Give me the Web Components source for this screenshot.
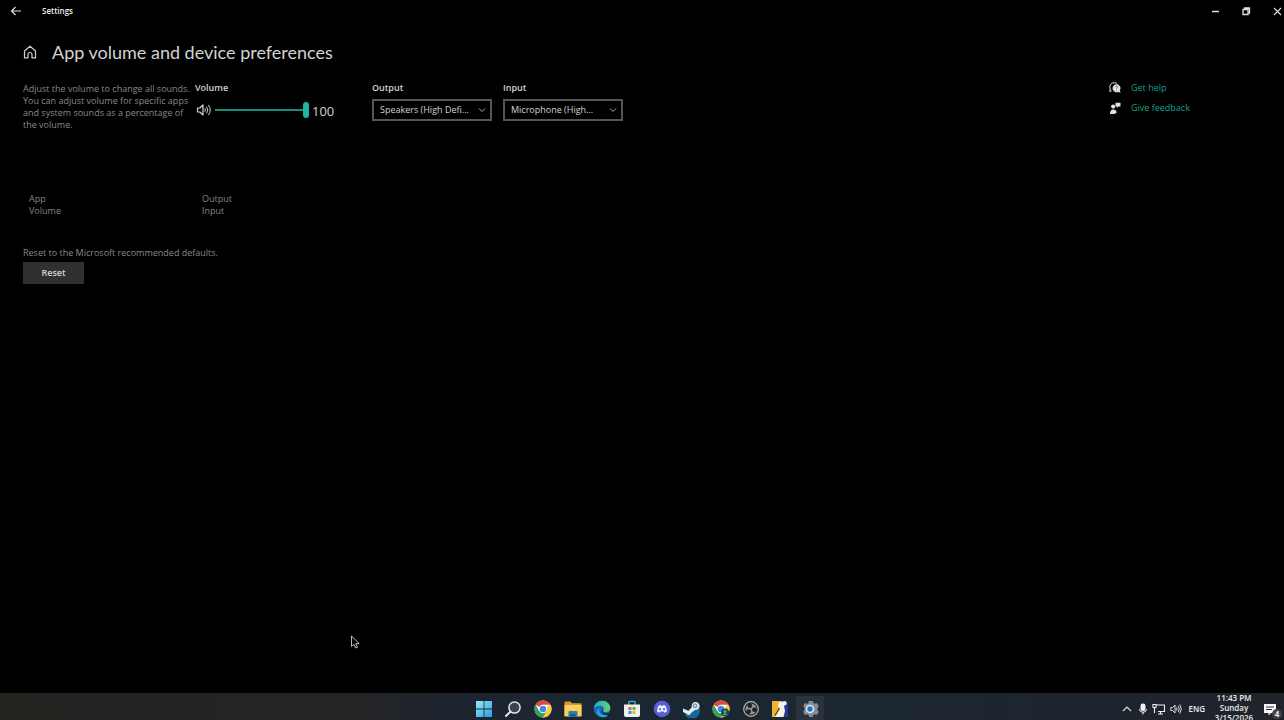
<!DOCTYPE html>
<html lang="en">
<head>
<meta charset="utf-8">
<title>Settings</title>
<style>
html,body{margin:0;height:100%;background:#000}
body{overflow:hidden;font-family:"Open Sans","Noto Sans",sans-serif;font-size:9px;line-height:12px;color:#d2d2d2}
</style>
</head>
<body>
<settings-desktop></settings-desktop>
<script>
const element = (name, markup, setup) => customElements.define(name, class extends HTMLElement {
  constructor() {
    super();
    this.attachShadow({mode: 'open'}).innerHTML = markup;
  }
  connectedCallback() {
    if (setup) setup(this, this.shadowRoot);
  }
});

const chromeArt = `
  <circle cx="9" cy="9" r="8.500" fill="#fff"/>
  <path d="M9 9 1.600 4.750A8.500 8.500 0 0 1 16.400 4.750H9z" fill="#e14a3b"/>
  <path d="M9 9 16.400 4.750A8.500 8.500 0 0 1 9 17.500L12.700 11z" fill="#fbca35"/>
  <path d="M9 9 12.700 11 9 17.500A8.500 8.500 0 0 1 1.600 4.750L5.300 11z" fill="#35a355"/>
  <circle cx="9" cy="9" r="4.200" fill="#fff"/><circle cx="9" cy="9" r="3.300" fill="#4389e8"/>`;

const icons = {
  back: [12, 12, `<path d="M11 6H2M5.500 2 1.500 6l4 4" fill="none" stroke="#ddd" stroke-width="1.200"/>`],
  home: [14, 14, `<path d="M1.500 6 7 1.200 12.500 6v6.800H9V9.500a2 2 0 0 0-4 0v3.300H1.500z" fill="none" stroke="#d0d0d0" stroke-width="1.200" stroke-linejoin="round"/>`],
  minimize: [10, 10, `<path d="M2 5.500h7" stroke="#ddd" stroke-width="1.500"/>`],
  restore: [10, 10, `<path d="M2 3.500h5v5H2zM3.500 3V2h5v5H7" fill="none" stroke="#ddd" stroke-width="1.300"/>`],
  close: [10, 10, `<path d="m2 2 7 7M9 2 2 9" stroke="#ddd" stroke-width="1.100"/>`],
  speaker: [16, 14, `<path d="M1.500 5h2.300L7 2v10L3.800 9H1.500z" fill="none" stroke="#d0d0d0" stroke-width="1.200" stroke-linejoin="round"/><path d="M8.800 5.200q1.200 1.800 0 3.600M10.600 3.600q2.400 3.400 0 6.800M12.400 2q3.600 5 0 10" fill="none" stroke="#d0d0d0"/>`],
  help: [12, 12, `<path d="M5.500.8A4.200 4.200 0 0 0 1.300 7L.7 9.400l2-.6M5.500.8q2 0 3 1.400" fill="none" stroke="#e2e2e2"/><path d="M7.300 2.300a4 4 0 1 0 2 7.600l2.300.9-.8-2.300a4 4 0 0 0-3.500-6.200z" fill="#e2e2e2"/><path d="M6.300 5q.2-1 1.200-.9t.9 1-.9 1.100v.6M7.500 8v.8" fill="none" stroke="#555" stroke-width=".7"/>`],
  feedback: [12, 12, `<circle cx="4.200" cy="4.600" r="2.100" fill="#e2e2e2"/><path d="M1 12q0-4.500 3.200-4.500T7.500 10v1L5 12zM6.500.8h5v3.800H9.500L8 6V4.600H6.500z" fill="#e2e2e2"/>`],
  start: [18, 18, `<defs><linearGradient id="g" x2="1" y2="1"><stop stop-color="#9be7fb"/><stop offset="1" stop-color="#269fdf"/></linearGradient></defs><path d="M1 1h7.600v7.600H1zM9.400 1H17v7.600H9.400zM1 9.400h7.600V17H1zM9.400 9.400H17V17H9.400z" fill="url(#g)"/>`],
  search: [18, 18, `<circle cx="10.500" cy="7.500" r="5.600" fill="#3c454e" stroke="#e2e5e8" stroke-width="1.500"/><path d="m6.300 11.700-4.300 4.300" stroke="#e2e5e8" stroke-width="2" stroke-linecap="round"/>`],
  chrome: [18, 18, chromeArt],
  folder: [18, 18, `<path d="M.5 2.500q0-1 1-1h4.700L8 3.300h8.500q1 0 1 1V16H.5z" fill="#d99b27"/><path d="M.5 5h17v11.500H.5z" fill="#f8ce61"/><path d="M4.500 16.500V12q0-1 1-1h7q1 0 1 1v4.500z" fill="#2b7faf"/><path d="M6.500 14h5v2.500h-5z" fill="#185982"/>`],
  edge: [18, 18, `<defs><linearGradient id="t" x2="1"><stop stop-color="#25a4dc"/><stop offset="1" stop-color="#60d46b"/></linearGradient></defs><circle cx="9" cy="9" r="8.300" fill="#1768b5"/><path d="M.8 8.500C1.300 3.800 4.800.7 9 .7c5 0 8.300 3.500 8.300 7 0 3-2.300 4.300-4.700 4.300-2 0-3-.8-2.300-1.800.8-1.100.6-4.500-3-4.500C4 5.700 1.500 7.300.8 8.500z" fill="url(#t)"/><path d="M7 7.700c-2.500 3 .2 7.500 4.800 7.500 2 0 3.400-.7 4.300-1.500C14 18 8.500 18.300 5.500 15.500 2.800 13 4 9 7 7.700z" fill="#2fa1df"/><path d="M9.700 8.500c-.8 2 .2 4.500 3.500 4.700 1.600.1 3-.6 3.700-1.300l.8 1.600-2 1.600c-6 .6-8.300-4-6-6.600z" fill="#1c2630"/>`],
  store: [18, 18, `<path d="M5.700 5V2.500q0-1 1-1h4.600q1 0 1 1V5" fill="none" stroke="#35a7dc" stroke-width="1.400"/><path d="M1 4.500h16V15q0 2-2 2H3q-2 0-2-2z" fill="#eef0f1"/><path d="M5.500 7h3v3h-3z" fill="#e45b35"/><path d="M9.500 7h3v3h-3z" fill="#78ab35"/><path d="M5.500 11h3v3h-3z" fill="#2798d4"/><path d="M9.500 11h3v3h-3z" fill="#edb72d"/>`],
  discord: [18, 18, `<circle cx="9" cy="9" r="8.300" fill="#5b5fd6"/><path d="M5.700 5.500 7.500 5l.5.800h2l.5-.8 1.800.5q1.700 2.500 1.700 6l-2.500 1.300-.9-1.300H7.400l-.9 1.300L4 11.500q0-3.500 1.700-6z" fill="#eeeefc"/><circle cx="7" cy="9.200" r="1.100" fill="#5b5fd6"/><circle cx="11" cy="9.200" r="1.100" fill="#5b5fd6"/>`],
  steam: [18, 18, `<path d="M1.500 11.500 6 13q5 0 10.500-7a8 8 0 0 1-13 9.500z" fill="#156798"/><path d="m1 8.500 5.500 2.300 3.300-3.500A4 4 0 1 1 13 10l-4 3a2.500 2.500 0 0 1-4.700.5L1 12z" fill="#e4eaf0"/><circle cx="13" cy="5.800" r="2" fill="#b8c9d8" stroke="#4b647a" stroke-width=".7"/>`],
  chromeProfile: [18, 18, chromeArt + `<circle cx="13" cy="12.500" r="4" fill="#164d49"/><circle cx="13" cy="11.400" r="1.500" fill="#48aa8e"/><path d="M10.500 15q2.500-3.500 5 0z" fill="#48aa8e"/>`],
  obs: [18, 18, `<circle cx="9" cy="9" r="7.300" fill="#1e2023" stroke="#b5b7b9" stroke-width="1.200"/><circle cx="9" cy="9" r="5.500" fill="#909396"/><g fill="#1e2023"><circle cx="7.800" cy="5.700" r="2.300"/><circle cx="12.400" cy="9.700" r="2.300"/><circle cx="6.600" cy="11.600" r="2.300"/></g>`],
  game: [18, 18, `<path d="M1 1h9v16H1z" fill="#f0b52c"/><path d="M10 1h7v16h-7z" fill="#26399b"/><path d="M8 2 14.500 1 16 4l-3 2 1 5-1.500 6H8l-4 0 5-8-2-3z" fill="#f7f2e5"/><path d="M8.500 8 4 15.500" stroke="#443827" stroke-width="1.200"/>`],
  gear: [18, 18, `<path d="m7.300 1 .4 2-1.600.8-1.900-.7-2.100 3.200 1.400 1.500v2.400l-1.400 1.500 2.100 3.200 1.900-.7 1.600.8.4 2h3.800l.4-2 1.600-.8 1.900.7 2.100-3.200-1.400-1.500V7.800l1.400-1.500-2.100-3.200-1.900.7-1.600-.8-.4-2z" fill="#858d96"/><circle cx="9" cy="9" r="4.300" fill="#d9eafa"/><circle cx="9" cy="9" r="2.700" fill="#2871b5"/>`],
  up: [10, 12, `<path d="m1 8 4-4 4 4" fill="none" stroke="#ddd" stroke-width="1.200"/>`],
  mic: [10, 12, `<rect x="2.500" y=".5" width="5" height="7.500" rx="2.200" fill="#f2f2f2"/><path d="M1.500 6q0 3.300 3.500 3.300T8.500 6M5 9v2.500" fill="none" stroke="#f2f2f2"/>`],
  network: [14, 12, `<path d="M4 2h8.500v6.500H6M8.500 9v2M6 11h5M1 1.500h3v3H1zM2.500 4.500V10" fill="none" stroke="#eee" stroke-width="1.100"/>`],
  sound: [12, 12, `<path d="M.8 4.500h1.700L5 2v8L2.500 7.500H.8z" fill="none" stroke="#ddd"/><path d="M6.500 4.500q1 1.500 0 3M8.200 3q2 3 0 6M9.800 1.500q3 4.500 0 9" fill="none" stroke="#ddd"/>`],
  note: [20, 16, `<path d="M1 1h12v9H8l-2.500 2.500V10H1z" fill="#f5f5f5"/><path d="M3 4h8M3 6.500h6" stroke="#333"/>`],
  cursor: [12, 14, `<path d="M1.500 1v10.500l2.400-2.300L5.500 13l2-.8L5.900 8.600h3.300z" fill="#080808" stroke="#bbb" stroke-width="1"/>`]
};

element('ui-icon', `<style>:host{display:inline-flex;flex:none}svg{display:block}</style><svg aria-hidden="true"></svg>`, (host, root) => {
  const icon = icons[host.getAttribute('name')];
  if (!icon) return;
  const [w, h, art] = icon;
  const svg = root.querySelector('svg');
  svg.setAttribute('viewBox', `0 0 ${w} ${h}`);
  svg.setAttribute('width', w);
  svg.setAttribute('height', h);
  svg.innerHTML = art;
});

element('title-bar', `<style>
  :host{display:flex;align-items:center;justify-content:space-between;height:22px;color:#eee;padding-left:10px}
  div{display:flex;align-items:center}
  button{display:flex;padding:0;border:0;background:none}
  .name{gap:20px;font-size:8px;font-weight:600}
  .controls{gap:21px;padding-right:2px}
  </style>
  <div class="name"><button aria-label="Back"><ui-icon name="back"></ui-icon></button><span><slot></slot></span></div>
  <div class="controls"><button aria-label="Minimize"><ui-icon name="minimize"></ui-icon></button><button aria-label="Restore"><ui-icon name="restore"></ui-icon></button><button aria-label="Close"><ui-icon name="close"></ui-icon></button></div>`);

element('page-heading', `<style>
  :host{display:flex;align-items:center;gap:15px;height:28px}
  h1{margin:0;font-size:18px;line-height:28px;font-weight:400;font-family:Lato,"Open Sans",sans-serif;white-space:nowrap}
  </style><ui-icon name="home"></ui-icon><h1><slot></slot></h1>`);

element('volume-slider', `<style>
  :host{display:block}
  label{display:block;font-weight:600}
  div{display:flex;align-items:center;height:24px;padding-top:4px}
  input{appearance:none;width:94px;height:16px;margin:0 3px;background:none}
  input::-webkit-slider-runnable-track{height:2px;background:#188b7e}
  input::-webkit-slider-thumb{appearance:none;width:6px;height:16px;margin-top:-7px;border-radius:3px;background:#1eb5a4}
  output{font-size:13px;line-height:16px;padding-top:2px}
  ui-icon{margin-left:1px}
  </style><label for="v">Volume</label><div><ui-icon name="speaker"></ui-icon><input id="v" type="range" value="100"><output for="v">100</output></div>`, (host, root) => {
  const input = root.querySelector('input');
  input.oninput = () => root.querySelector('output').value = input.value;
});

element('device-select', `<style>
  :host{display:block;width:120px}
  label{display:block;font-weight:600;margin-bottom:5px}
  .box{display:grid;align-items:center}
  select,svg{grid-area:1/1}
  select{appearance:none;width:100%;height:22px;margin:0;padding:0 6px;border:2px solid #555;border-radius:0;background:#000;color:#d2d2d2;font:500 9px/12px "Open Sans",sans-serif}
  svg{justify-self:end;margin-right:6px;pointer-events:none}
  </style><label for="s"></label><div class="box"><select id="s"><option></option></select><svg width="8" height="6" viewBox="0 0 8 6"><path d="m1 1.500 3 3 3-3" fill="none" stroke="#aaa"/></svg></div>`, (host, root) => {
  root.querySelector('label').textContent = host.getAttribute('label');
  root.querySelector('option').textContent = host.getAttribute('value');
});

element('help-link', `<style>
  :host{display:block}
  a{display:flex;align-items:center;gap:10px;color:#1d9d8c;text-decoration:none;font-weight:500}
  </style><a href="#"><span><slot></slot></span></a>`, (host, root) => {
  const icon = document.createElement('ui-icon');
  icon.setAttribute('name', host.getAttribute('icon'));
  root.querySelector('a').prepend(icon);
});

element('settings-page', `<style>
  :host{display:block;padding:16px 24px 0 23px}
  .row{display:flex;align-items:flex-start;margin-top:16px}
  p{margin:0;color:#888}
  .about{width:172px;white-space:nowrap;padding-top:1px}
  volume-slider{width:177px}
  .devices{display:flex;gap:11px}
  aside{display:grid;gap:8px;margin-left:auto;width:151px}
  .apps{display:grid;grid-template-columns:173px 173px;margin:62px 6px 0;color:#858585}
  .reset{margin-top:30px}
  button{display:block;width:61px;height:22px;margin-top:3px;padding:0;border:0;background:#303030;color:#d2d2d2;font:600 9px/12px "Open Sans",sans-serif}
  </style>
  <page-heading>App volume and device preferences</page-heading>
  <div class="row">
    <p class="about">Adjust the volume to change all sounds.<br>You can adjust volume for specific apps<br>and system sounds as a percentage of<br>the volume.</p>
    <volume-slider></volume-slider>
    <div class="devices"><device-select label="Output" value="Speakers (High Defi..."></device-select><device-select label="Input" value="Microphone (High..."></device-select></div>
    <aside><help-link icon="help">Get help</help-link><help-link icon="feedback">Give feedback</help-link></aside>
  </div>
  <div class="apps"><div>App<br>Volume</div><div>Output<br>Input</div></div>
  <p class="reset">Reset to the Microsoft recommended defaults.</p>
  <button>Reset</button>`);

element('task-bar', `<style>
  :host{display:grid;grid-template-columns:1fr 356px 1fr;grid-template-rows:27px;height:27px;overflow:hidden;background:linear-gradient(90deg,#242320 0,#232425 28%,#1d2430 36%,#1b2732 52%,#1c2530 75%,#20232a 100%);color:#eee;font-size:8px;line-height:11px}
  nav{grid-column:2;display:grid;grid-template-columns:repeat(12,1fr);margin-left:5px;margin-right:-5px}
  button{display:flex;align-items:center;justify-content:center;padding:5px 0 0;border:0;background:none}
  button:last-child{background:#2a333d;margin:3px 1px 0;padding-top:2px}
  .tray{display:flex;justify-content:flex-end;gap:4px;padding-right:1px}
  .tray>ui-icon,.lang{margin-top:10px}
  .tray>ui-icon:first-child{margin-right:2px}
  .lang{margin-left:2px;font-weight:600}
  time{width:50px;text-align:center;font-weight:600;line-height:10px;white-space:nowrap}
  .alerts{position:relative;display:block;height:27px}
  .alerts ui-icon{margin-top:10px}
  .alerts b{position:absolute;right:1px;top:16px;width:10px;height:10px;border-radius:5px;background:#444;line-height:10px;text-align:center}
  </style>
  <nav aria-label="Taskbar"></nav>
  <div class="tray"><ui-icon name="up"></ui-icon><ui-icon name="mic"></ui-icon><ui-icon name="network"></ui-icon><ui-icon name="sound"></ui-icon><span class="lang">ENG</span><time>11:43 PM<br>Sunday<br>3/15/2026</time><span class="alerts"><ui-icon name="note"></ui-icon><b>4</b></span></div>`, (host, root) => {
  root.querySelector('nav').innerHTML = ['start','search','chrome','folder','edge','store','discord','steam','chromeProfile','obs','game','gear'].map(n => `<button aria-label="${n}"><ui-icon name="${n}"></ui-icon></button>`).join('');
});

element('settings-desktop', `<style>
  :host{display:grid;grid-template-rows:auto 1fr auto;height:100vh}
  .pointer{position:absolute;left:350px;top:635px}
  </style>
  <title-bar>Settings</title-bar><settings-page></settings-page><task-bar></task-bar><ui-icon class="pointer" name="cursor"></ui-icon>`);
</script>
</body>
</html>
